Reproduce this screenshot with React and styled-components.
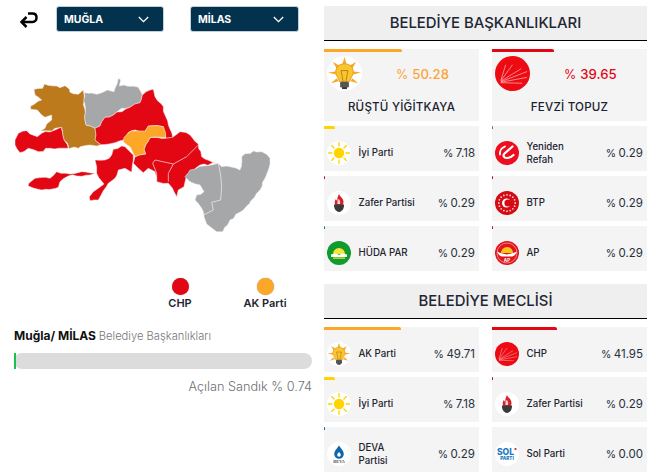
import React from 'react';
import styled, { createGlobalStyle } from 'styled-components';

const Global = createGlobalStyle`
  html, body { margin: 0; padding: 0; background: #fff; overflow: hidden; }
  body { font-family: Inter, "Liberation Sans", sans-serif; color: #17202c; }
  * { box-sizing: border-box; }
`;

const Page = styled.div`
  width: 663px; height: 476px; display: grid; grid-template-columns: 324px 323px; overflow: hidden;
`;
const Left = styled.div`
  display: flex; flex-direction: column; padding-top: 6px;
`;
const Toolbar = styled.div`
  display: flex; align-items: center; height: 26px; padding-left: 19px;
`;
const Back = styled.svg`
  width: 19px; height: 18px; margin-right: 18px; flex: none;
`;
const Select = styled.div`
  width: ${p => p.$w}px; height: 26px; margin-right: ${p => p.$mr || 0}px; background: #03324f; border-radius: 3px;
  border: 1px solid #c4ced6; color: #fff; font-size: 10.5px; font-weight: 700;
  display: flex; align-items: center; justify-content: space-between; padding: 0 14px 0 7px;
`;
const MapWrap = styled.svg`
  display: block; width: 320px; height: 160px; margin-top: 43px;
`;
const Legend = styled.div`
  display: flex; margin-top: 43px; height: 34px; padding-left: 140px;
`;
const LegendItem = styled.div`
  width: ${p => p.$w}px; display: flex; flex-direction: column; align-items: center; gap: 1px;
  font-size: 11px; line-height: 14px; font-weight: 600; color: #1d2530;
`;
const Dot = styled.span`
  width: 17px; height: 17px; border-radius: 50%; background: ${p => p.$c}; box-shadow: 0 0 1px #888;
`;
const Progress = styled.div`
  padding: 16px 12px 0 14px; display: flex; flex-direction: column;
`;
const Title = styled.div`
  font-size: 12px; line-height: 16px; font-weight: 700; color: #111; white-space: nowrap;
  span { font-weight: 300; font-size: 11.2px; color: #777; }
`;
const Track = styled.div`
  height: 16px; background: #dcdcdc; border-radius: 8px; margin-top: 9px;
`;
const Fill = styled.div`
  height: 100%; background: #1fbf4f;
`;
const Opened = styled.div`
  text-align: right; font-size: 12.7px; font-weight: 300; color: #6f6f6f; margin-top: 10px;
`;

const Right = styled.div`
  display: flex; flex-direction: column; padding-top: 6px;
`;
const Heading = styled.div`
  height: 35px; background: #efefef; border-bottom: 1px solid #000; display: flex; align-items: center; justify-content: center;
  font-size: 14.9px; font-weight: 500; color: #1e2633; margin-bottom: 8px;
`;
const Grid = styled.div`
  display: grid; grid-template-columns: 155px 155px; column-gap: 13px; row-gap: 5px; margin-bottom: 13px;
`;
const Card = styled.div`
  position: relative; background: #f4f4f4; height: 45px; display: flex; align-items: center; padding: 8px 4px 0 3px;
`;
const Big = styled(Card)`
  height: 72px; display: grid; grid-template-columns: 35px 1fr; grid-template-rows: 35px 1fr; padding: 7px 0 0 3px;
`;
const Bar = styled.div`
  position: absolute; left: 0; top: 0; height: 3px; background: ${p => p.$c}; border-radius: 0 2px 0 0;
`;
const Logo = styled.svg`
  width: ${p => p.$s || 24}px; height: ${p => p.$s || 24}px; flex: none; display: block;
`;
const Name = styled.div`
  flex: 1; margin-left: 7.5px; font-size: 9.7px; line-height: 13px; font-weight: 500; color: #1d2530; padding-right: 4px; white-space: nowrap;
`;
const Pct = styled.div`
  font-size: 11.5px; color: #26303c; white-space: nowrap; font-weight: 400;
  small { font-size: 10.5px; margin-right: 2.5px; }
`;
const BigPct = styled.div`
  font-size: 13.2px; font-weight: 500; color: ${p => p.$c}; align-self: center; padding-left: 34px; white-space: nowrap;
  small { font-size: 12.5px; margin-right: 4px; font-weight: 400; }
`;
const BigName = styled.div`
  grid-column: 1 / 3; text-align: center; font-size: 11.6px; font-weight: 500; color: #1a2330; letter-spacing: .2px; align-self: center; padding: 2px 3px 0 0;
`;

const rays = (cx, cy, r1, r2, n, c, w) =>
  Array.from({ length: n }, (_, i) => {
    const a = (i * 2 * Math.PI) / n;
    return <line key={i} x1={cx + r1 * Math.cos(a)} y1={cy + r1 * Math.sin(a)} x2={cx + r2 * Math.cos(a)} y2={cy + r2 * Math.sin(a)} stroke={c} strokeWidth={w} strokeLinecap="round" />;
  });

const AkLogo = ({ s }) => (
  <Logo $s={s} viewBox="0 0 36 36">
    <circle cx="18" cy="18" r="18" fill="#fff" />
    <g fill="#f7a828">
      <path d="M18 1l2 7h-4z" /><path d="M6 6l7 4-3 3z" /><path d="M30 6l-7 4 3 3z" />
      <path d="M1 17l8-1v3z" /><path d="M35 17l-8-1v3z" /><path d="M4 28l6-5 2 3z" /><path d="M32 28l-6-5-2 3z" />
    </g>
    <path d="M18 8c-6 0-9 4-9 8.500 0 4 3 5.500 4 10h10c1-4.500 4-6 4-10C27 12 24 8 18 8z" fill="#fbc52d" stroke="#e09a1d" strokeWidth="1" />
    <path d="M14.500 15l2 11M21.500 15l-2 11M14.500 15h7" stroke="#a8701a" strokeWidth=".8" fill="none" />
    <rect x="13.500" y="26.500" width="9" height="6" rx="1.500" fill="#555" />
    <rect x="15.500" y="32" width="5" height="2" fill="#333" />
  </Logo>
);
const ChpLogo = ({ s }) => (
  <Logo $s={s} viewBox="0 0 36 36">
    <circle cx="18" cy="18" r="18" fill="#ee0a12" />
    <g stroke="#fde0e0" strokeWidth=".6" fill="none">
      <path d="M6 25L11 9" /><path d="M6 25.500L18 9" /><path d="M6 26L27 13" /><path d="M6 26.500L33 16" /><path d="M6 27L33 22" /><path d="M6 27.500L28 28" />
    </g>
  </Logo>
);
const IyiLogo = () => (
  <Logo viewBox="0 0 24 24">
    <circle cx="12" cy="12" r="12" fill="#fff" />
    <circle cx="12" cy="12" r="5.200" fill="#ffd400" />
    {rays(12, 12, 7, 10.500, 8, '#ffd400', 1.300)}
  </Logo>
);
const ZaferLogo = () => (
  <Logo viewBox="0 0 24 24">
    <circle cx="12" cy="12" r="12" fill="#fff" />
    <path d="M12 3c1 3 4.500 4 4.500 8 0 1-.3 2-.8 3H8.300C7 11.500 8 9 9 8c.3 1 .8 1.500 1.500 1.500C10 7 11 5 12 3z" fill="#d8222a" />
    <path d="M11.500 8c1.500 1 2 2.500 1.500 5h-2.500c-.4-2 0-3.500 1-5z" fill="#f6c9c9" />
    <path d="M7 13.500h10c.3 3.500-1.500 7-5 7.500-3.500-.5-5.300-4-5-7.500z" fill="#3a3a3a" />
  </Logo>
);
const HudaLogo = () => (
  <Logo viewBox="0 0 24 24">
    <circle cx="12" cy="12" r="12" fill="#119a2e" />
    <path d="M6 13a6 6 0 0 1 12 0z" fill="#f6e63a" />
    <path d="M4 13.500c3-1 6-1 8 .5 2-1.500 5-1.500 8-.5v2.500H4z" fill="#fff" />
    <rect x="6" y="16.500" width="12" height="1.200" fill="#f6e63a" />
  </Logo>
);
const RefahLogo = () => (
  <Logo viewBox="0 0 24 24">
    <circle cx="12" cy="12" r="12" fill="#ed0d1f" />
    <path d="M17.500 5.500L9.500 12.500c-2 2-.5 4.500 2 4.500 2.500 0 5-1 7-3" stroke="#fff" strokeWidth="2.200" fill="none" strokeLinecap="round" />
    <path d="M10 5.500C6.500 7 4.500 10 5 13.500" stroke="#fff" strokeWidth="1.800" fill="none" strokeLinecap="round" />
  </Logo>
);
const BtpLogo = () => (
  <Logo viewBox="0 0 24 24">
    <circle cx="12" cy="12" r="12" fill="#d40b14" />
    {Array.from({ length: 16 }, (_, i) => {
      const a = (i * Math.PI) / 8;
      return <circle key={i} cx={12 + 8.200 * Math.cos(a)} cy={12 + 8.200 * Math.sin(a)} r=".9" fill="#f8cccc" />;
    })}
    <circle cx="11.500" cy="12" r="4.500" fill="#fff" />
    <circle cx="13" cy="12" r="3.600" fill="#d40b14" />
  </Logo>
);
const ApLogo = () => (
  <Logo viewBox="0 0 24 24">
    <circle cx="12" cy="12" r="12" fill="#e0151d" />
    <circle cx="12" cy="12" r="10" fill="none" stroke="#f8c8c8" strokeWidth=".6" />
    <path d="M6 12a6 6 0 0 1 12 0z" fill="#f8c515" />
    <path d="M2 10.500c4 2 7 2 10 3 3-1 6-1 10-3-1 3-3 4.500-5 5H7c-2-.5-4-2-5-5z" fill="#fff" />
    <text x="12" y="20.500" fontSize="4.500" fontWeight="700" fill="#fff" textAnchor="middle" fontFamily="Inter, sans-serif">AP</text>
  </Logo>
);
const DevaLogo = () => (
  <Logo viewBox="0 0 24 24">
    <circle cx="12" cy="12" r="12" fill="#fff" />
    <path d="M12 3.500c2.500 3.500 4.800 5.500 4.800 8.500a4.800 4.800 0 0 1-9.600 0C7.200 9 9.500 7 12 3.500z" fill="#0e66ad" />
    <path d="M12 10c1 1.200 1.800 2 1.800 3a1.800 1.800 0 0 1-3.600 0c0-1 .8-1.800 1.800-3z" fill="#fff" />
    <text x="12" y="21" fontSize="4.200" fill="#444" textAnchor="middle" fontWeight="700" fontFamily="Liberation Serif, serif">DEVA</text>
  </Logo>
);
const SolLogo = () => (
  <Logo viewBox="0 0 24 24">
    <circle cx="12" cy="12" r="12" fill="#fff" />
    <text x="10.500" y="12.500" fontSize="8.500" fontWeight="800" fill="#1a78c2" textAnchor="middle" fontFamily="Inter, sans-serif">SOL</text>
    <circle cx="20.500" cy="7" r="1.100" fill="#e0151d" />
    <text x="12" y="17.800" fontSize="4.600" fontWeight="800" fill="#1a78c2" textAnchor="middle" fontFamily="Inter, sans-serif">PARTİ</text>
  </Logo>
);

const Row = ({ logo, name, pct, color, bar }) => (
  <Card>
    <Bar $c={color} style={{ width: bar }} />
    {logo}
    <Name>{name}</Name>
    <Pct><small>%</small>{pct}</Pct>
  </Card>
);

const Region = styled.polygon`
  fill: ${p => p.$c}; stroke: #f1f1f1; stroke-width: 1.500; stroke-linejoin: round;
`;
const Border = styled.polyline`
  fill: none; stroke: #f4f4f4; stroke-width: 2; stroke-linejoin: round;
`;
const RED = '#e30613', GREY = '#a6a7a9', BROWN = '#bc7a1d', ORANGE = '#fda728';

const regions = [
  [BROWN, '102,268 128,265 133,252 180,263 195,257 208,267 210,277 235,283 250,270 253,300 254,350 258,375 285,385 288,405 285,420 303,434 270,435 207,446 203,430 192,420 185,382 165,385 155,393 140,392 122,392 135,385 140,372 155,360 155,345 135,352 125,345 112,330 92,328 92,318 125,300 105,285'],
  [GREY, '253,278 290,283 322,270 342,275 345,265 352,250 355,235 362,240 358,258 372,255 415,262 427,285 420,308 390,322 365,325 340,345 315,352 300,378 285,385 258,375 254,350'],
  [RED, '285,385 300,378 315,352 340,345 390,322 420,308 427,285 450,270 460,268 465,290 490,320 495,345 505,375 518,412 498,415 490,380 445,378 435,395 395,392 370,420 345,428 303,434 285,420 288,405'],
  [RED, '45,420 55,400 80,392 90,402 112,410 125,400 165,390 183,382 192,420 205,445 150,445 115,455 85,445 60,458 45,435'],
  [RED, '85,552 105,535 150,535 170,515 210,522 245,515 285,520 270,525 205,528 180,545 175,562 125,570 85,558'],
  [RED, '340,448 365,438 375,440 400,465 398,490 395,517 375,505 355,510 345,535 325,550 310,572 295,600 270,602 268,590 280,575 295,565 312,552 290,520 290,500 285,480 315,480 335,465'],
  [RED, '405,470 437,462 432,448 450,413 498,415 518,412 540,395 570,405 595,432 605,470 650,490 600,495 560,525 552,560 535,570 530,590 522,575 505,550 470,545 465,515 445,505 430,518 415,505 400,490'],
  [ORANGE, '395,392 435,393 445,378 490,380 497,413 450,413 432,448 437,462 405,470 390,440 370,425 372,412'],
  [GREY, '555,530 570,510 610,498 655,490 665,500 680,498 690,500 720,510 725,470 760,453 785,455 810,475 805,510 780,570 770,580 730,630 690,660 668,695 650,695 620,672 612,650 605,625 585,600 590,585 612,575 600,555 570,545'],
];

const borders = [
  '655,490 662,525 665,560 662,600 635,607 640,630 610,645',
  '595,435 560,470 520,492 465,480 458,490 470,520 470,545',
  '520,492 505,520 505,545',
];

const jitter = (x, y, k) => {
  const v = Math.sin(x * 12.9898 + y * 78.233 + k * 37.719) * 43758.5453;
  return (v - Math.floor(v) - 0.5) * 6;
};
const rough = (s) => {
  const pts = s.split(' ').map((p) => p.split(',').map(Number));
  const out = [];
  pts.forEach(([x1, y1], i) => {
    const [x2, y2] = pts[(i + 1) % pts.length];
    out.push(`${x1},${y1}`);
    const n = Math.floor(Math.hypot(x2 - x1, y2 - y1) / 12);
    for (let j = 1; j < n; j++) {
      const x = Math.round(x1 + ((x2 - x1) * j) / n), y = Math.round(y1 + ((y2 - y1) * j) / n);
      out.push(`${x + jitter(x, y, 1)},${y + jitter(x, y, 2)}`);
    }
  });
  return out.join(' ');
};

const Chevron = () => (
  <svg width="11" height="7" viewBox="0 0 11 7"><path d="M.8 1l4.700 4.700L10.200 1" fill="none" stroke="#fff" strokeWidth="1.300" /></svg>
);

export default function App() {
  return (
    <Page>
      <Global />
      <Left>
        <Toolbar>
          <Back viewBox="0 0 19 18">
            <path d="M7.500 7L2.500 12l5 5" fill="none" stroke="#000" strokeWidth="2.500" />
            <path d="M9 3.500h4.500c2.500 0 4 1.600 4 4s-1.500 4.500-4 4.500H3" fill="none" stroke="#000" strokeWidth="2.500" />
          </Back>
          <Select $w={108} $mr={26}>MUĞLA <Chevron /></Select>
          <Select $w={109}>MİLAS <Chevron /></Select>
        </Toolbar>
        <MapWrap viewBox="0 225 960 480">
          {regions.map(([c, pts], i) => <Region key={i} $c={c} points={rough(pts)} />)}
          {borders.map((pts, i) => <Border key={i} points={pts} />)}
        </MapWrap>
        <Legend>
          <LegendItem $w={80}><Dot $c={RED} />CHP</LegendItem>
          <LegendItem $w={90}><Dot $c={ORANGE} />AK Parti</LegendItem>
        </Legend>
        <Progress>
          <Title>Muğla/ MİLAS <span>Belediye Başkanlıkları</span></Title>
          <Track><Fill style={{ width: 2 }} /></Track>
          <Opened>Açılan Sandık % 0.74</Opened>
        </Progress>
      </Left>
      <Right>
        <Heading>BELEDİYE BAŞKANLIKLARI</Heading>
        <Grid>
          <Big>
            <Bar $c={ORANGE} style={{ width: 78 }} />
            <AkLogo s={35} />
            <BigPct $c="#fda43a"><small>%</small>50.28</BigPct>
            <BigName>RÜŞTÜ YİĞİTKAYA</BigName>
          </Big>
          <Big>
            <Bar $c={RED} style={{ width: 62 }} />
            <ChpLogo s={35} />
            <BigPct $c={RED}><small>%</small>39.65</BigPct>
            <BigName>FEVZİ TOPUZ</BigName>
          </Big>
          <Row logo={<IyiLogo />} name="İyi Parti" pct="7.18" color="#ffd400" bar={11} />
          <Row logo={<RefahLogo />} name={<>Yeniden<br />Refah</>} pct="0.29" color="#8a6d3b" bar={1} />
          <Row logo={<ZaferLogo />} name="Zafer Partisi" pct="0.29" color="#c8102e" bar={1} />
          <Row logo={<BtpLogo />} name="BTP" pct="0.29" color="#d40b14" bar={1} />
          <Row logo={<HudaLogo />} name="HÜDA PAR" pct="0.29" color="#119a2e" bar={1} />
          <Row logo={<ApLogo />} name="AP" pct="0.29" color="#d40b14" bar={1} />
        </Grid>
        <Heading>BELEDİYE MECLİSİ</Heading>
        <Grid>
          <Row logo={<AkLogo />} name="AK Parti" pct="49.71" color={ORANGE} bar={77} />
          <Row logo={<ChpLogo />} name="CHP" pct="41.95" color={RED} bar={65} />
          <Row logo={<IyiLogo />} name="İyi Parti" pct="7.18" color="#ffd400" bar={11} />
          <Row logo={<ZaferLogo />} name="Zafer Partisi" pct="0.29" color="#a5162a" bar={1} />
          <Row logo={<DevaLogo />} name={<>DEVA<br />Partisi</>} pct="0.29" color="#0e66ad" bar={1} />
          <Row logo={<SolLogo />} name="Sol Parti" pct="0.00" color="#f4f4f4" bar={0} />
        </Grid>
      </Right>
    </Page>
  );
}
